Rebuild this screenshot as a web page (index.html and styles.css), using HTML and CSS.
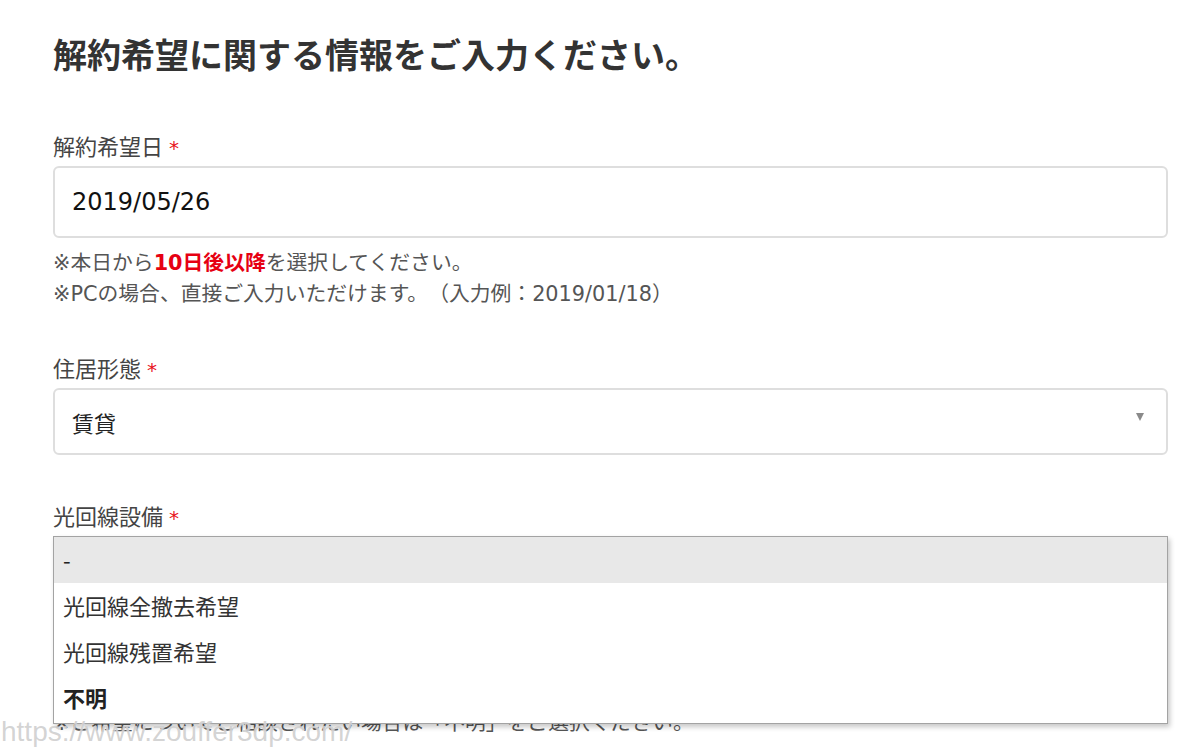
FILE: index.html
```html
<!DOCTYPE html>
<html lang="ja">
<head>
<meta charset="utf-8">
<title>解約希望に関する情報</title>
<link rel="stylesheet" href="styles.css">
</head>
<body>
<main class="page">
  <h1 class="title">解約希望に関する情報をご入力ください。</h1>

  <section class="field field-date">
    <div class="label">解約希望日<span class="req">*</span></div>
    <div class="input">2019/05/26</div>
    <p class="help">※本日から<strong class="em">10日後以降</strong>を選択してください。<br>※PCの場合、直接ご入力いただけます。（入力例：2019/01/18）</p>
  </section>

  <section class="field field-house">
    <div class="label">住居形態<span class="req">*</span></div>
    <div class="select"><span>賃貸</span><span class="arrow"></span></div>
  </section>

  <section class="field field-fiber">
    <div class="label">光回線設備<span class="req">*</span></div>
    <div class="select-wrap">
      <div class="select select-hidden"><span>-</span><span class="arrow"></span></div>
      <ul class="dropdown">
        <li class="opt opt-active">-</li>
        <li class="opt">光回線全撤去希望</li>
        <li class="opt">光回線残置希望</li>
        <li class="opt opt-bold">不明</li>
      </ul>
    </div>
    <p class="help help-under">※ご希望についてご相談されたい場合は「不明」をご選択ください。</p>
  </section>
</main>
<div class="watermark">https://www.zouffer3dp.com/</div>
</body>
</html>
```

FILE: styles.css
```css
html, body {
  margin: 0;
  padding: 0;
  background: #fff;
}
body {
  width: 1200px;
  height: 748px;
  overflow: hidden;
  position: relative;
  font-family: "DejaVu Sans", "Noto Sans CJK JP", sans-serif;
  color: #333;
  text-spacing-trim: space-all;
}
.page {
  padding: 30px 32px 0 53px;
}
.title {
  margin: 0;
  font-family: "Noto Sans CJK JP", sans-serif;
  font-weight: 700;
  font-size: 34px;
  line-height: 48px;
  color: #333;
}
.field-date {
  margin-top: 52px;
}
.field-house {
  margin-top: 42px;
}
.field-fiber {
  margin-top: 45px;
}
.label {
  font-family: "Noto Sans CJK JP", sans-serif;
  font-size: 22px;
  line-height: 30px;
  color: #444;
  margin-bottom: 3px;
}
.req {
  color: #e8141b;
  margin-left: 6px;
  font-family: "DejaVu Sans", sans-serif;
  font-size: 20px;
}
.input {
  box-sizing: border-box;
  height: 72px;
  border: 2px solid #dedede;
  border-radius: 6px;
  padding: 0 17px;
  display: flex;
  align-items: center;
  font-size: 24px;
  color: #111;
}
.help {
  margin: 10px 0 0;
  font-size: 20.8px;
  line-height: 31px;
  color: #555;
}
.em {
  color: #e60012;
  font-weight: 700;
}
.select {
  box-sizing: border-box;
  height: 67px;
  border: 2px solid #dedede;
  border-radius: 6px;
  padding: 0 22px 0 17px;
  display: flex;
  align-items: center;
  justify-content: space-between;
  font-family: "Noto Sans CJK JP", sans-serif;
  font-size: 22px;
  color: #222;
}
.arrow {
  width: 0;
  height: 0;
  border-left: 4.5px solid transparent;
  border-right: 4.5px solid transparent;
  border-top: 8px solid #8a8a8a;
  margin-top: -10px;
}
.select-wrap {
  position: relative;
  margin-top: 2px;
}
.dropdown {
  position: absolute;
  top: 0;
  left: 0;
  right: 0;
  margin: 0;
  padding: 0 0 2px;
  list-style: none;
  background: #fff;
  border: 1px solid #a3a3a3;
  box-shadow: 2px 3px 5px rgba(0, 0, 0, 0.22);
  z-index: 2;
}
.opt {
  height: 46px;
  display: flex;
  align-items: center;
  padding-left: 9px;
  padding-bottom: 2px;
  box-sizing: border-box;
  font-family: "Noto Sans CJK JP", sans-serif;
  font-size: 22px;
  color: #333;
}
.opt-active {
  background: #e8e8e8;
  color: #222;
}
.opt-bold {
  font-weight: 700;
  color: #222;
}
.help-under {
  margin-top: 105px;
}
.watermark {
  position: absolute;
  left: 1px;
  bottom: 1px;
  font-family: "Liberation Sans", Arial, sans-serif;
  font-size: 28px;
  line-height: 30px;
  color: rgba(175, 175, 175, 0.55);
  text-shadow: 0 0 1px rgba(255, 255, 255, 0.9);
  z-index: 3;
}
```
